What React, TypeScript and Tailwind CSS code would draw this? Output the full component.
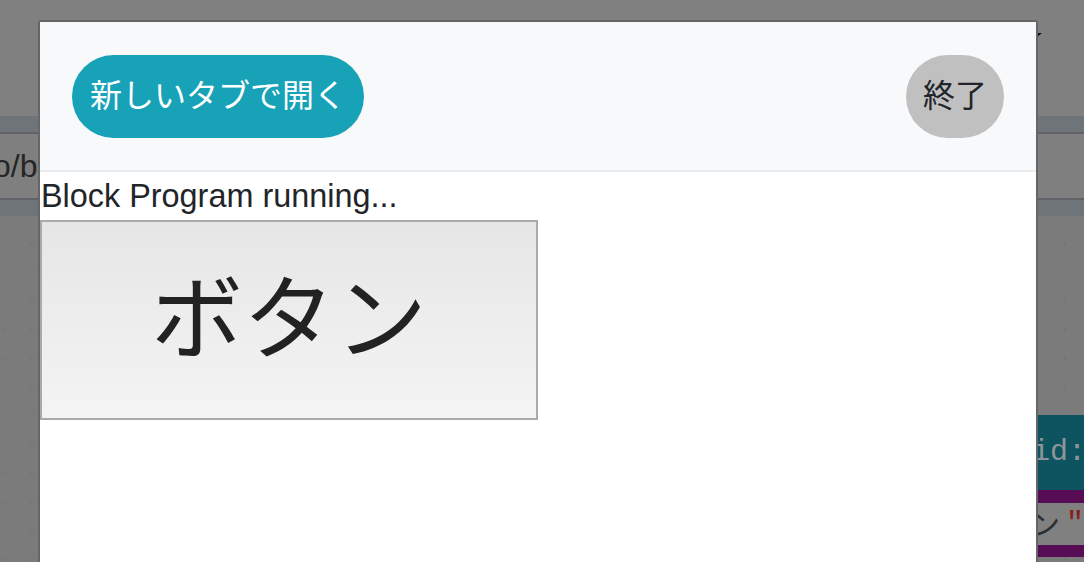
import React from "react";

const FONT = { fontFamily: '"Liberation Sans", "Noto Sans CJK JP", sans-serif' };

function GridMarks() {
  return (
    <svg className="absolute inset-0 h-full w-full" aria-hidden="true">
      <defs>
        <pattern id="blk-grid" x="2" y="-2" width="28.7" height="28.7" patternUnits="userSpaceOnUse">
          <path d="M0 0h5M2.5 -2.5v5" transform="translate(-2.5 0)" stroke="#6c6c6c" strokeWidth="1" />
        </pattern>
      </defs>
      <rect width="100%" height="100%" fill="url(#blk-grid)" />
    </svg>
  );
}

export default function App() {
  return (
    <div className="relative h-[562px] w-[1084px] overflow-hidden bg-[#808080]" style={FONT}>
      {/* page behind the dialog (dimmed) */}
      <div className="flex h-full flex-col">
        <div className="h-[116px]" />
        <div className="h-[18px] border-b-2 border-[#5f6367] bg-[#6f7478]" />
        <div className="flex h-[64px] items-center bg-[#7f7f7f]">
          <span className="ml-[-7px] text-[32px] leading-none text-[#262626]">o/b</span>
        </div>
        <div className="h-[18px] border-t-2 border-[#5f6367] bg-[#6f7478]" />
        <div className="relative flex-1 bg-[#7b7b7b]">
          <GridMarks />
        </div>
      </div>

      {/* small caret peeking out on the right */}
      <div className="absolute left-[1032px] top-[33px] h-0 w-0 border-x-[5px] border-t-[4px] border-x-transparent border-t-[#111]" />

      {/* blocks on the workspace canvas */}
      <div className="absolute left-[980px] top-[415px] flex h-[75px] w-[140px] items-center bg-[#0e5360] pl-[52px]">
        <span className="font-['Liberation_Mono',monospace] text-[30px] text-[#8c9698]">id:</span>
      </div>
      <div className="absolute left-[980px] top-[490px] flex h-[67px] w-[140px] flex-col bg-[#560d56] py-[13px]">
        <div className="flex h-[42px] items-center bg-[#808080] pl-[50px] text-[30px]">
          <span className="text-[#2a2e33]">ン</span>
          <span className="ml-[6px] font-['Liberation_Mono',monospace] text-[#8a1c1c]">"</span>
        </div>
      </div>

      {/* dialog */}
      <div className="absolute left-[38px] top-[20px] h-[600px] w-[1000px] overflow-hidden rounded-t-[3px] border-2 border-[#666] bg-white">
        <div className="flex h-[150px] items-center justify-between border-b-2 border-[#e9ecef] bg-[#f8f9fa] px-[32px]">
          <button className="h-[83px] rounded-full bg-[#17a2b8] px-[18px] text-[32px] text-white">
            新しいタブで開く
          </button>
          <button className="h-[83px] rounded-full bg-[#c0c0c0] px-[17px] text-[32px] text-[#212529]">
            終了
          </button>
        </div>
        <div className="pl-px text-[32.4px] leading-[48px] text-[#212529]">Block Program running...</div>
        <button className="flex h-[200px] w-[498px] items-center justify-center border-2 border-[#aaaaaa] bg-gradient-to-b from-[#e6e6e6] to-[#f4f4f4] text-[92px] text-[#222]">
          ボタン
        </button>
      </div>
    </div>
  );
}
